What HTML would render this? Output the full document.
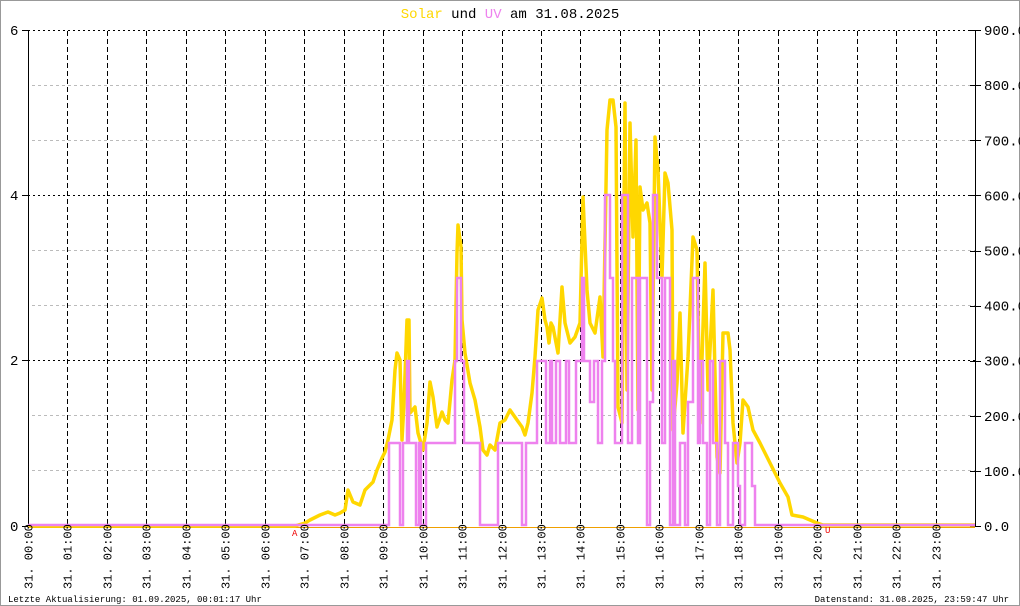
<!DOCTYPE html>
<html><head><meta charset="utf-8"><style>
html,body{margin:0;padding:0;background:#fff}
svg{display:block}
text{font-family:"Liberation Mono","DejaVu Sans Mono",monospace}
</style></head><body>
<svg width="1020" height="606" viewBox="0 0 1020 606" xmlns="http://www.w3.org/2000/svg">
<rect x="0.5" y="0.5" width="1019" height="605" fill="#fff" stroke="#999" stroke-width="1"/>
<text x="510" y="18" font-size="14" text-anchor="middle"><tspan fill="#ffd700">Solar</tspan><tspan fill="#000"> und </tspan><tspan fill="#ee82ee">UV</tspan><tspan fill="#000"> am 31.08.2025</tspan></text>
<g stroke="#bbb" stroke-width="1" stroke-dasharray="3,3">
<line x1="32" y1="470.5" x2="975" y2="470.5"/>
<line x1="32" y1="415.5" x2="975" y2="415.5"/>
<line x1="32" y1="305.5" x2="975" y2="305.5"/>
<line x1="32" y1="250.5" x2="975" y2="250.5"/>
<line x1="32" y1="140.5" x2="975" y2="140.5"/>
<line x1="32" y1="85.5" x2="975" y2="85.5"/>
</g>
<g stroke="#000" stroke-width="1" stroke-dasharray="2,3">
<line x1="28" y1="30.5" x2="975" y2="30.5"/>
<line x1="28" y1="195.5" x2="975" y2="195.5"/>
<line x1="28" y1="360.5" x2="975" y2="360.5"/>
</g>
<g stroke="#000" stroke-width="1" stroke-dasharray="5,3" id="vl"></g>
<line x1="28.5" y1="30" x2="28.5" y2="527" stroke="#000"/>
<line x1="975.5" y1="30" x2="975.5" y2="527" stroke="#000"/>
<g stroke="#000">
<line x1="22" y1="30.5" x2="28" y2="30.5"/><line x1="22" y1="195.5" x2="28" y2="195.5"/><line x1="22" y1="360.5" x2="28" y2="360.5"/><line x1="22" y1="526.5" x2="28" y2="526.5"/>
</g>
<g font-size="14" fill="#000">
<text x="10" y="35">6</text><text x="10" y="200">4</text><text x="10" y="365">2</text><text x="10" y="531">0</text>
</g>
<g font-size="14" fill="#000" id="rl"></g>
<g stroke="#000" id="rt"></g>
<line x1="28" y1="527.5" x2="975" y2="527.5" stroke="#f0a000" stroke-width="1"/>
<polyline fill="none" stroke="#ffd700" stroke-width="3.5" stroke-linejoin="round" points="28,526 295,526 305,523 310,520 320,515 328,512 335,515 340,513 345,510 348,490 353,502 360,505 365,490 373,482 377,470 382,458 385,452 388,440 392,420 395,370 397,353 400,360 402,440 404,403 407,320 409,320 410,413 415,407 418,433 423,450 427,423 430,382 433,397 437,427 442,412 445,420 448,423 452,380 455,360 457,253 458,225 461,247 462,320 465,353 470,383 475,400 480,427 483,450 487,455 490,445 495,450 500,423 505,420 510,410 517,420 522,427 525,435 528,423 532,393 535,357 538,310 542,298 545,320 547,327 549,343 551,323 553,327 558,353 562,287 565,323 570,343 575,337 580,323 583,197 587,290 590,323 595,333 600,297 603,357 607,130 610,100 613,100 616,127 618,407 622,423 625,103 627,390 630,123 633,237 636,140 638,410 640,187 643,210 647,203 650,223 652,390 655,137 658,170 662,277 665,173 668,183 672,230 673,430 677,383 680,313 683,433 688,357 693,237 697,250 700,423 705,263 708,390 713,290 717,457 720,473 723,333 728,333 730,350 733,423 737,463 740,443 743,400 748,407 753,430 760,443 770,463 780,483 788,497 792,515 803,517 817,523 823,525 975,525"/>
<polyline fill="none" stroke="#ee82ee" stroke-width="2.5" points="28,525 389,525 389,443 400,443 400,525 403,525 403,443 407,443 407,361 409,361 409,443 416,443 416,525 419,525 419,443 421,443 421,525 426,525 426,443 455,443 455,361 457,361 457,278 461,278 461,361 464,361 464,443 480,443 480,525 498,525 498,443 522,443 522,525 526,525 526,443 537,443 537,361 546,361 546,443 550,443 550,361 552,361 552,443 556,443 556,361 560,361 560,443 566,443 566,361 569,361 569,443 576,443 576,361 582,361 582,278 584,278 584,361 590,361 590,402 594,402 594,361 598,361 598,443 602,443 602,361 605,361 605,195 610,195 610,278 613,278 613,361 615,361 615,443 622,443 622,195 628,195 628,443 632,443 632,278 638,278 638,443 640,443 640,278 647,278 647,525 650,525 650,402 653,402 653,195 657,195 657,278 662,278 662,443 665,443 665,278 670,278 670,525 673,525 673,361 675,361 675,525 680,525 680,443 685,443 685,525 688,525 688,402 693,402 693,278 698,278 698,443 700,443 700,361 703,361 703,443 707,443 707,525 710,525 710,361 713,361 713,443 717,443 717,525 720,525 720,361 725,361 725,443 728,443 728,525 733,525 733,443 738,443 738,486 740,486 740,525 745,525 745,443 752,443 752,486 755,486 755,525 975,525"/>
<text x="292" y="536" font-size="9" fill="#e00">A</text>
<text x="825" y="533" font-size="9" fill="#e00">U</text>
<g font-size="12" fill="#000" id="xl"></g>
<text x="8" y="602" font-size="9">Letzte Aktualisierung: 01.09.2025, 00:01:17 Uhr</text>
<text x="1009" y="602" font-size="9" text-anchor="end">Datenstand: 31.08.2025, 23:59:47 Uhr</text>
<script>
var ns="http://www.w3.org/2000/svg",vl=document.getElementById('vl'),xl=document.getElementById('xl'),rl=document.getElementById('rl'),rt=document.getElementById('rt');
for(var h=0;h<24;h++){var x=Math.round(28+h*39.46)+0.5;
if(h>0){var l=document.createElementNS(ns,'line');l.setAttribute('x1',x);l.setAttribute('x2',x);l.setAttribute('y1',31);l.setAttribute('y2',526);vl.appendChild(l);}
var t=document.createElementNS(ns,'text');t.setAttribute('transform','translate('+(x+4)+',589) rotate(-90)');t.textContent='31. '+(h<10?'0':'')+h+':00';xl.appendChild(t);}
for(var k=0;k<=9;k++){var y=526-k*55.1;var t=document.createElementNS(ns,'text');t.setAttribute('x',984);t.setAttribute('y',y+5);t.textContent=(k*100)+'.0';rl.appendChild(t);
var l=document.createElementNS(ns,'line');l.setAttribute('x1',970);l.setAttribute('x2',981);l.setAttribute('y1',Math.round(y)+0.5);l.setAttribute('y2',Math.round(y)+0.5);rt.appendChild(l);}
</script>
</svg>
</body></html>
